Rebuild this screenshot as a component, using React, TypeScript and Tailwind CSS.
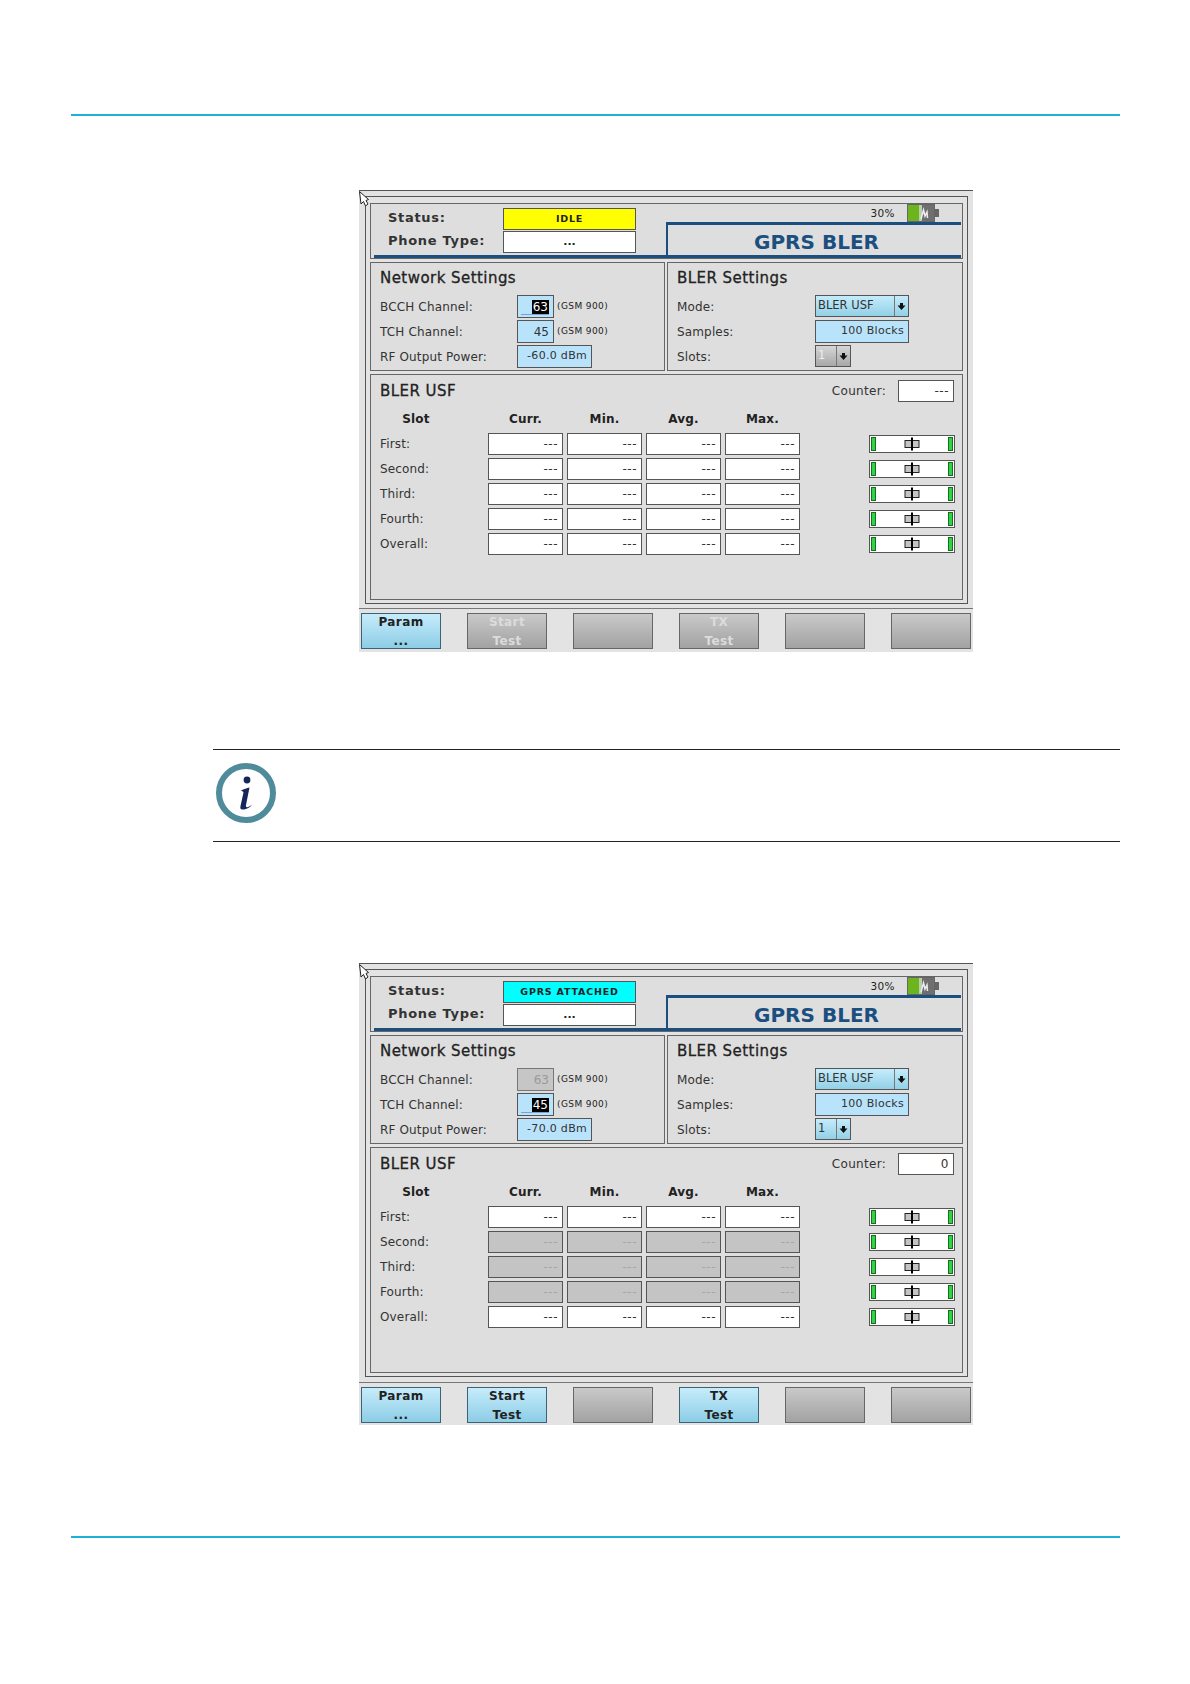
const SLOTS = ["First:", "Second:", "Third:", "Fourth:", "Overall:"];

const HEADERS = ["Curr.", "Min.", "Avg.", "Max."];

type ScreenData = {
  status: string;
  statusClass: string;
  bcchActive: boolean;
  power: string;
  counter: string;
  slotsEnabled: boolean;
  testEnabled: boolean;
  disabledRows: number[];
  keysClass: string;
};

const idle: ScreenData = {
  status: "IDLE",
  statusClass: "bg-[#ffff00]",
  bcchActive: true,
  power: "-60.0 dBm",
  counter: "---",
  slotsEnabled: false,
  testEnabled: false,
  disabledRows: [],
  keysClass: "mt-[4px]",
};

const attached: ScreenData = {
  status: "GPRS ATTACHED",
  statusClass: "bg-[#00ffff]",
  bcchActive: false,
  power: "-70.0 dBm",
  counter: "0",
  slotsEnabled: true,
  testEnabled: true,
  disabledRows: [1, 2, 3],
  keysClass: "mt-[5px]",
};

function Arrow() {
  return (
    <svg width="9" height="9" viewBox="0 0 9 9">
      <path d="M3 1h3v2.500h2.500L4.500 8 0.500 3.500H3z" fill="#111" />
    </svg>
  );
}

function Cursor() {
  return (
    <svg className="absolute left-0 top-0" width="11" height="17" viewBox="0 0 11 17">
      <path d="M0.500 0.500L9.500 8.500 7 9.500 9 13 6.500 15 4.500 10.500 2 13z" fill="#fff" stroke="#222" strokeWidth="1" />
    </svg>
  );
}

function Battery() {
  return (
    <svg width="33" height="18" viewBox="0 0 33 18">
      <rect x="0.500" y="0.500" width="27" height="17" fill="#6f6f6f" stroke="#666" />
      <rect x="1" y="1" width="11" height="16" fill="#6cb51f" />
      <rect x="12" y="1" width="3" height="16" fill="#b8cfa8" />
      <rect x="28" y="5" width="4" height="8" fill="#666" />
      <path d="M14 15L16.500 6 18 12 20 8 20.500 14" fill="none" stroke="#eee" strokeWidth="1.500" />
    </svg>
  );
}

function InfoIcon() {
  return (
    <svg width="62" height="62" viewBox="0 0 62 62">
      <circle cx="31" cy="31" r="27" fill="#fff" stroke="#4f8b9b" strokeWidth="6" />
      <circle cx="32" cy="18" r="3.400" fill="#14265a" />
      <path
        d="M26 28.500C29 27 32 26 34.500 25.500L31 43C30.600 45 31.500 45.500 33 45C34.500 44.500 36 43.500 37 42.500C35 46 31 47.500 27.500 47.500C25.500 47.500 25 46.500 25.500 44L28.500 30.500C28 29.500 27 29 26 28.500Z"
        fill="#14265a"
      />
    </svg>
  );
}

function Marker() {
  return (
    <svg width="16" height="14" viewBox="0 0 16 14">
      <rect x="1" y="3.500" width="14" height="7" fill="#c4c4c4" stroke="#222" />
      <rect x="7" y="0.500" width="2" height="13" fill="#000" />
    </svg>
  );
}

function Slider() {
  return (
    <div className="ml-[69px] flex h-[18px] w-[86px] items-center justify-between border border-[#555] bg-white px-[1px]">
      <div className="h-[14px] w-[5px] border border-[#1c6b26] bg-[#2fd540]" />
      <Marker />
      <div className="h-[14px] w-[5px] border border-[#1c6b26] bg-[#2fd540]" />
    </div>
  );
}

function BlueField({ value, className }: { value: string; className: string }) {
  return (
    <div className={`flex h-[23px] items-center justify-end border border-[#555] bg-[#b9e3fb] pr-[4px] text-[11px] tracking-[0.3px] text-[#333] ${className}`}>
      {value}
    </div>
  );
}

function ChannelField({ value, active, disabled }: { value: string; active: boolean; disabled: boolean }) {
  if (disabled) {
    return (
      <div className="flex h-[23px] w-[37px] items-center justify-end border border-[#777] bg-[#c6c6c6] pr-[4px] text-[12px] text-[#999]">
        {value}
      </div>
    );
  }
  return (
    <div className="relative flex h-[23px] w-[37px] items-center justify-end border border-[#555] bg-[#b9e3fb] pr-[4px] text-[12px] text-[#333]">
      {active ? <span className="bg-black px-[1px] leading-[14px] text-white">{value}</span> : value}
      {active && <div className="absolute bottom-[2px] left-[3px] h-[1px] w-[28px] bg-[#7b9fd6]" />}
    </div>
  );
}

function Select({ value, width, disabled }: { value: string; width: string; disabled?: boolean }) {
  const bg = disabled ? "from-[#d6d6d6] to-[#a8a8a8] text-[#eee]" : "from-[#c4ecfb] to-[#92d0e6] text-[#333]";
  return (
    <div className={`flex h-[22px] items-center self-start border border-[#555] bg-gradient-to-b pl-[2px] text-[11.500px] ${bg} ${width}`}>
      <span className="flex-1">{value}</span>
      <div className="flex h-full w-[14px] items-center justify-center border-l border-[#777]">
        <Arrow />
      </div>
    </div>
  );
}

function Row({ label, labelWidth = "w-[137px]", children }: { label: string; labelWidth?: string; children: React.ReactNode }) {
  return (
    <div className="flex h-[23px] items-center">
      <div className={`text-[12px] tracking-[0.15px] text-[#333] ${labelWidth}`}>{label}</div>
      {children}
    </div>
  );
}

function Gsm() {
  return <span className="ml-[3px] text-[9px] tracking-[0.4px] text-[#222]">(GSM 900)</span>;
}

function Heading({ children }: { children: React.ReactNode }) {
  return <span className="text-[15px] tracking-[0.45px] text-[#222] [-webkit-text-stroke:0.3px_#222]">{children}</span>;
}

function SoftKey({ lines, enabled }: { lines: string[]; enabled: boolean }) {
  const look = enabled
    ? "border-[#3c6274] from-[#c6ecfb] to-[#8ccde6] text-[#222]"
    : "border-[#666] from-[#c9c9c9] to-[#a2a2a2] text-[#dcdcdc]";
  return (
    <div className={`flex h-[36px] w-[80px] flex-col items-center justify-center border bg-gradient-to-b pt-[2px] text-[12px] font-bold leading-[19px] tracking-[0.4px] ${look}`}>
      {lines.map((l) => (
        <span key={l}>{l}</span>
      ))}
    </div>
  );
}

function Screen({ data }: { data: ScreenData }) {
  return (
    <div className="relative ml-[359px] h-[462px] w-[614px] border-t border-[#555] bg-[#e3e3e3] pt-[5px] font-['DejaVu_Sans',sans-serif]">
      <Cursor />
      <div className="ml-[6px] h-[408px] w-[603px] border border-[#555] px-[4px] pt-[6px]">
        <div className="h-[56px] border border-[#666] bg-[#dedede] pl-[3px] pr-[1px]">
          <div className="flex h-[54px]">
            <div className="w-[292px] border-b-[3px] border-[#1a4f80] pt-[4px]">
              <div className="flex h-[22px] items-center">
                <div className="w-[129px] pb-[2px] pl-[14px] text-[13px] font-bold tracking-[0.7px] text-[#333]">Status:</div>
                <div className={`flex h-[22px] w-[133px] items-center justify-center border border-[#555] pt-[1px] text-[9.500px] font-bold tracking-[0.8px] text-[#222] ${data.statusClass}`}>
                  {data.status}
                </div>
              </div>
              <div className="mt-[1px] flex h-[22px] items-center">
                <div className="w-[129px] pb-[2px] pl-[14px] text-[13px] font-bold tracking-[0.7px] text-[#333]">Phone Type:</div>
                <div className="flex h-[22px] w-[133px] items-center justify-center border border-[#555] bg-white text-[11px] font-bold text-[#222]">
                  ...
                </div>
              </div>
            </div>
            <div className="w-[295px]">
              <div className="flex h-[18px] items-start justify-end pr-[21px]">
                <span className="mr-[12px] mt-[2px] text-[10.500px] tracking-[0.4px] text-[#222]">30%</span>
                <Battery />
              </div>
              <div className="flex h-[36px] items-center justify-center border-y-[3px] border-l-2 border-[#1a4f80] pl-[4px] pt-[4px] text-[20px] font-bold leading-[20px] text-[#1a4f80]">
                GPRS BLER
              </div>
            </div>
          </div>
        </div>

        <div className="mt-[3px] grid h-[109px] grid-cols-[295px_296px] gap-x-[2px]">
          <div className="border border-[#666] bg-[#dedede] pl-[9px]">
            <div className="flex h-[32px] items-center pb-[1px]">
              <Heading>Network Settings</Heading>
            </div>
            <div className="flex flex-col gap-[2px]">
              <Row label="BCCH Channel:">
                <ChannelField value="63" active={data.bcchActive} disabled={!data.bcchActive} />
                <Gsm />
              </Row>
              <Row label="TCH Channel:">
                <ChannelField value="45" active={!data.bcchActive} disabled={false} />
                <Gsm />
              </Row>
              <Row label="RF Output Power:">
                <BlueField value={data.power} className="w-[75px]" />
              </Row>
            </div>
          </div>
          <div className="border border-[#666] bg-[#dedede] pl-[9px]">
            <div className="flex h-[32px] items-center pb-[1px]">
              <Heading>BLER Settings</Heading>
            </div>
            <div className="flex flex-col gap-[2px]">
              <Row label="Mode:" labelWidth="w-[138px]">
                <Select value="BLER USF" width="w-[94px]" />
              </Row>
              <Row label="Samples:" labelWidth="w-[138px]">
                <BlueField value="100 Blocks" className="w-[94px]" />
              </Row>
              <Row label="Slots:" labelWidth="w-[138px]">
                <Select value="1" width="w-[36px]" disabled={!data.slotsEnabled} />
              </Row>
            </div>
          </div>
        </div>

        <div className="mt-[3px] h-[226px] border border-[#666] bg-[#dedede] pl-[9px] pt-[5px]">
          <div className="flex h-[22px] items-center justify-between pr-[8px]">
            <Heading>BLER USF</Heading>
            <div className="flex items-center">
              <span className="mr-[12px] text-[12px] tracking-[0.3px] text-[#333]">Counter:</span>
              <div className="flex h-[22px] w-[56px] items-center justify-end border border-[#555] bg-white pr-[4px] text-[12px] tracking-[0.5px] text-[#333]">
                {data.counter}
              </div>
            </div>
          </div>
          <div className="mt-[1px] flex h-[30px] items-center pt-[1px] text-[12px] font-bold tracking-[0.2px] text-[#222]">
            <div className="w-[72px] text-center">Slot</div>
            <div className="w-[36px]" />
            {HEADERS.map((h) => (
              <div key={h} className="mr-[4px] w-[75px] text-center">
                {h}
              </div>
            ))}
          </div>
          <div className="flex flex-col gap-[3px]">
            {SLOTS.map((slot, i) => {
              const off = data.disabledRows.includes(i);
              return (
                <div key={slot} className="flex h-[22px] items-center">
                  <div className="w-[108px] text-[12px] tracking-[0.15px] text-[#333]">{slot}</div>
                  <div className="flex gap-[4px]">
                    {HEADERS.map((h) => (
                      <div
                        key={h}
                        className={`flex h-[22px] w-[75px] items-center justify-end border border-[#555] pr-[4px] text-[12px] tracking-[0.5px] ${off ? "bg-[#c4c4c4] text-[#a6a6a6]" : "bg-white text-[#333]"}`}
                      >
                        ---
                      </div>
                    ))}
                  </div>
                  <Slider />
                </div>
              );
            })}
          </div>
        </div>
      </div>

      <div className={`flex gap-[26px] border-t border-[#777] pl-[2px] pt-[4px] ${data.keysClass}`}>
        <SoftKey lines={["Param", "..."]} enabled />
        <SoftKey lines={["Start", "Test"]} enabled={data.testEnabled} />
        <SoftKey lines={[]} enabled={false} />
        <SoftKey lines={["TX", "Test"]} enabled={data.testEnabled} />
        <SoftKey lines={[]} enabled={false} />
        <SoftKey lines={[]} enabled={false} />
      </div>
    </div>
  );
}

export default function App() {
  return (
    <div className="h-[1684px] w-[1190px] overflow-hidden bg-white pt-[114px]">
      <div className="ml-[71px] h-[2px] w-[1049px] bg-[#1fb0d6]" />
      <div className="mt-[74px]">
        <Screen data={idle} />
      </div>
      <div className="ml-[213px] mt-[97px] flex h-[93px] w-[907px] items-center border-y border-[#222] pb-[6px] pl-[2px]">
        <InfoIcon />
      </div>
      <div className="mt-[121px]">
        <Screen data={attached} />
      </div>
      <div className="ml-[71px] mt-[111px] h-[2px] w-[1049px] bg-[#1fb0d6]" />
    </div>
  );
}
